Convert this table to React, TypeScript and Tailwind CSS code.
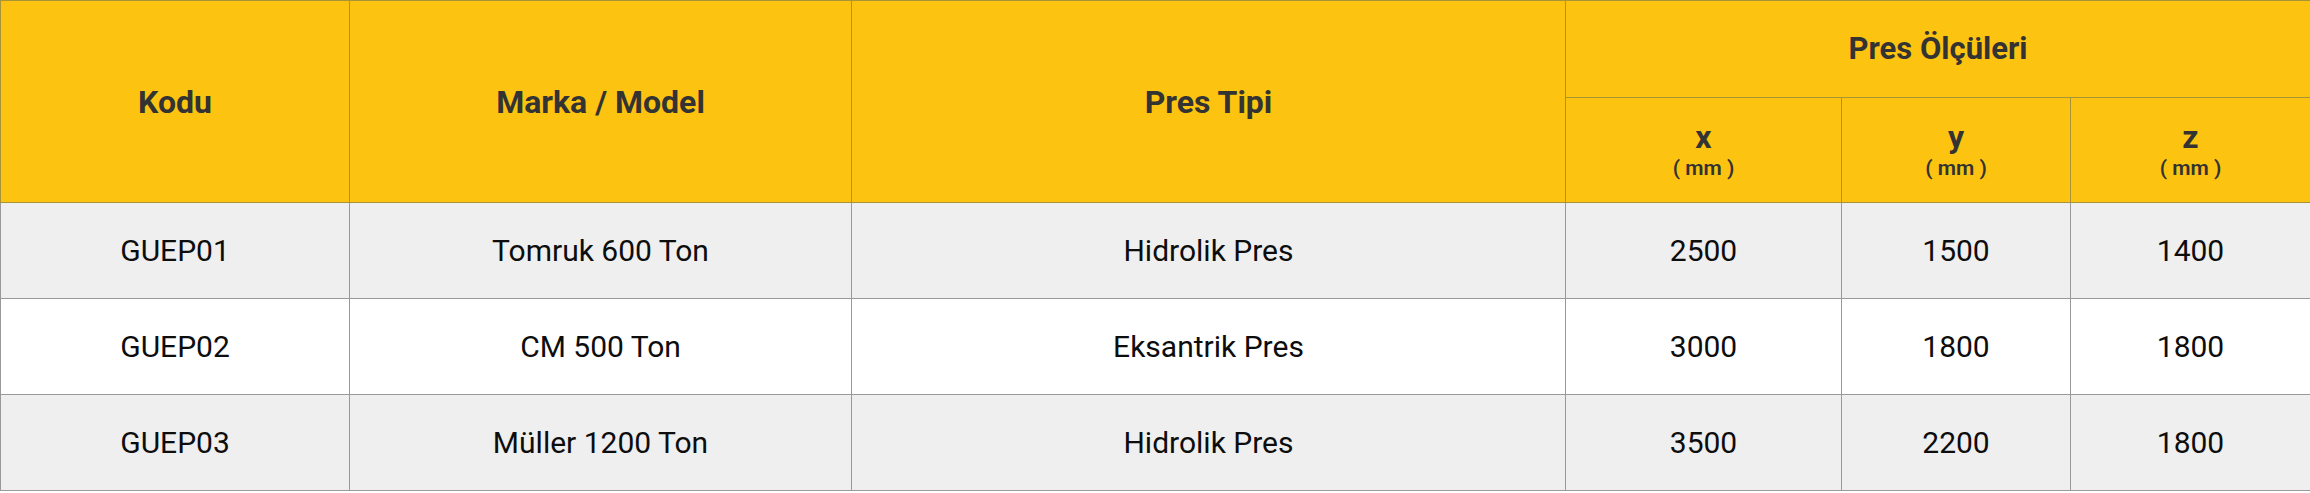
import React from "react";

const rows = [
  { kod: "GUEP01", model: "Tomruk 600 Ton", tip: "Hidrolik Pres", x: "2500", y: "1500", z: "1400", bg: "bg-[#efefef]" },
  { kod: "GUEP02", model: "CM 500 Ton", tip: "Eksantrik Pres", x: "3000", y: "1800", z: "1800", bg: "bg-white" },
  { kod: "GUEP03", model: "Müller 1200 Ton", tip: "Hidrolik Pres", x: "3500", y: "2200", z: "1800", bg: "bg-[#efefef]" },
];

export default function App() {
  const th = "border border-[#a8923a] text-center align-middle font-bold text-[#333333] p-0";
  const td = "border border-[#999999] text-center align-middle text-[30px] text-[#0d0d0d] p-0";
  return (
    <div className="w-[2310px] h-[493px] bg-white font-['Roboto',sans-serif]">
      <table className="w-[2310px] table-fixed border-collapse">
        <colgroup>
          <col className="w-[349px]" />
          <col className="w-[502px]" />
          <col className="w-[714px]" />
          <col className="w-[276px]" />
          <col className="w-[229px]" />
          <col className="w-[240px]" />
        </colgroup>
        <thead className="bg-[#fdc311]">
          <tr className="h-[97px]">
            <th rowSpan={2} className={`${th} text-[32px]`}>Kodu</th>
            <th rowSpan={2} className={`${th} text-[32px]`}>Marka / Model</th>
            <th rowSpan={2} className={`${th} text-[32px]`}>Pres Tipi</th>
            <th colSpan={3} className={`${th} text-[31px]`}>Pres Ölçüleri</th>
          </tr>
          <tr className="h-[105px]">
            {["x", "y", "z"].map((k) => (
              <th key={k} className={th}>
                <div className="flex flex-col items-center pt-[4px]">
                  <span className="text-[32px] leading-[32px]">{k}</span>
                  <span className="text-[21px] leading-[30px] font-semibold">( mm )</span>
                </div>
              </th>
            ))}
          </tr>
        </thead>
        <tbody>
          {rows.map((r) => (
            <tr key={r.kod} className={`h-[96px] ${r.bg}`}>
              <td className={td}>{r.kod}</td>
              <td className={td}>{r.model}</td>
              <td className={td}>{r.tip}</td>
              <td className={td}>{r.x}</td>
              <td className={td}>{r.y}</td>
              <td className={td}>{r.z}</td>
            </tr>
          ))}
        </tbody>
      </table>
    </div>
  );
}
